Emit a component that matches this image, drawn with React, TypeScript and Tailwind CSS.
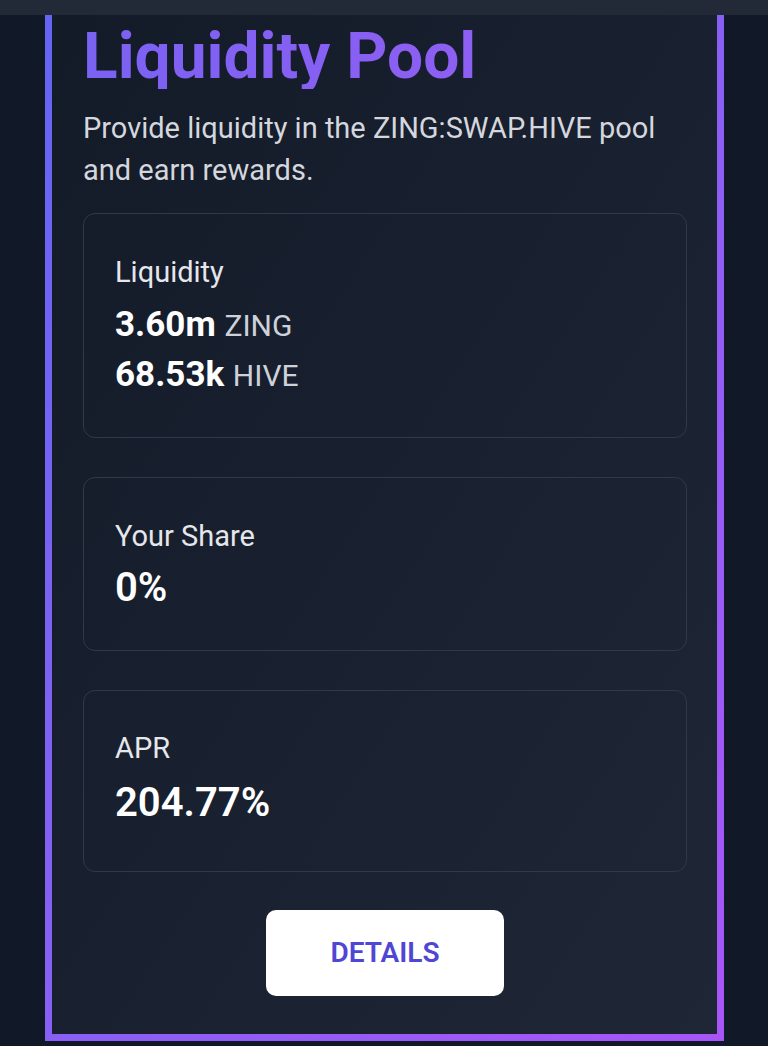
import React from "react";

type Stat = {
  label: string;
  children: React.ReactNode;
  className?: string;
};

function StatCard({ label, children, className }: Stat) {
  return (
    <div className={`rounded-xl border border-[#313949] pl-[31px] ${className ?? ""}`}>
      <div className="text-[29px] leading-[36px] text-[#e5e7eb]">{label}</div>
      {children}
    </div>
  );
}

export default function App() {
  return (
    <div
      className="min-h-screen bg-[#111827] pb-[5px]"
      style={{ fontFamily: "Roboto, 'Liberation Sans', sans-serif" }}
    >
      <div className="h-[15px] bg-[#222a38]" />
      <div className="ml-[45px] mr-[44px] bg-gradient-to-br from-[#6366f1] to-[#a855f7] px-[7px] pb-[7px]">
        <div className="bg-gradient-to-br from-[#131a28] to-[#1f2737] pl-[31px] pr-[30px] pt-[10px] pb-[38px]">
          <h1 className="bg-gradient-to-r from-[#7a62f3] to-[#985cf2] bg-clip-text text-[64px] font-bold leading-[64px] text-transparent">
            Liquidity Pool
          </h1>
          <p className="mt-[18px] text-[29px] leading-[42px] text-[#d4d7dd]">
            Provide liquidity in the ZING:SWAP.HIVE pool and earn rewards.
          </p>

          <div className="mt-[22px] flex flex-col gap-[39px]">
            <StatCard label="Liquidity" className="pt-[40px] pb-[37px]">
              <div className="mt-[10px] text-[35px] leading-[50px] text-white">
                <div>
                  <span className="font-bold">3.60m</span>{" "}
                  <span className="text-[30px] leading-none text-[#cdd2da]">ZING</span>
                </div>
                <div>
                  <span className="font-bold">68.53k</span>{" "}
                  <span className="text-[30px] leading-none text-[#cdd2da]">HIVE</span>
                </div>
              </div>
            </StatCard>

            <StatCard label="Your Share" className="pt-[40px] pb-[38px]">
              <div className="mt-[10px] text-[40px] font-semibold leading-[48px] text-white">0%</div>
            </StatCard>

            <StatCard label="APR" className="pt-[39px] pb-[44px]">
              <div className="mt-[13px] text-[40px] font-semibold leading-[48px] text-white">204.77%</div>
            </StatCard>
          </div>

          <div className="mt-[38px] flex justify-center">
            <button className="h-[86px] w-[238px] rounded-[10px] bg-white text-[28px] font-semibold text-[#4f46d5]">
              DETAILS
            </button>
          </div>
        </div>
      </div>
    </div>
  );
}
